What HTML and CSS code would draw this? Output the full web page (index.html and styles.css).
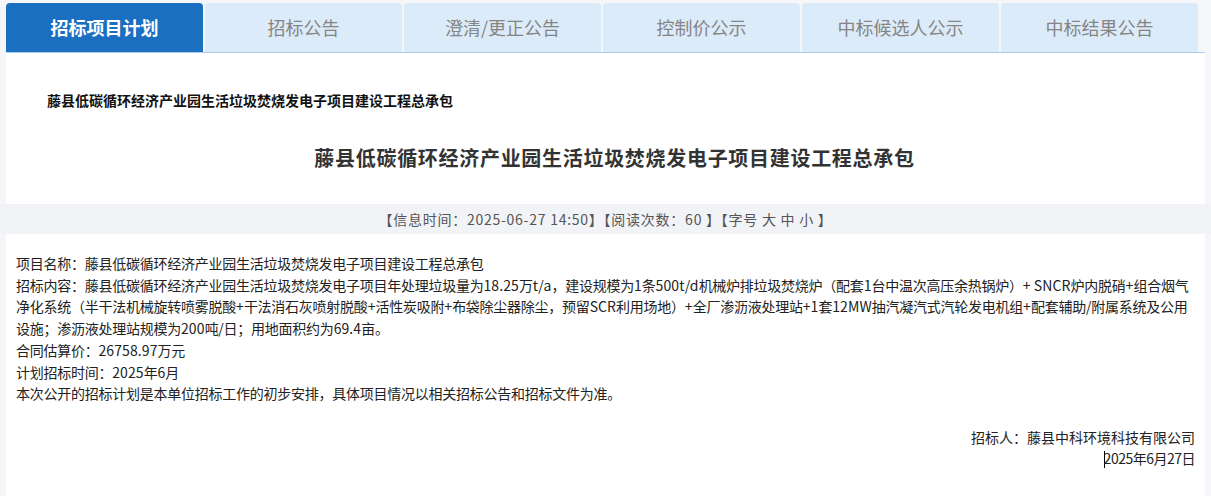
FILE: index.html
```html
<!DOCTYPE html>
<html lang="zh-CN">
<head>
    <meta charset="UTF-8">
    <meta name="viewport" content="width=device-width, initial-scale=1.0">
    <title>招标项目计划</title>
    <link rel="stylesheet" href="styles.css">
</head>
<body>
    <div class="wrap">
        <ul class="tabs">
            <li class="tab active">招标项目计划</li>
            <li class="tab">招标公告</li>
            <li class="tab">澄清/更正公告</li>
            <li class="tab">控制价公示</li>
            <li class="tab">中标候选人公示</li>
            <li class="tab">中标结果公告</li>
        </ul>

        <div class="head">
            <p class="crumb">藤县低碳循环经济产业园生活垃圾焚烧发电子项目建设工程总承包</p>
            <h1 class="title">藤县低碳循环经济产业园生活垃圾焚烧发电子项目建设工程总承包</h1>
        </div>

        <div class="meta">【信息时间：2025-06-27 14:50】【阅读次数：60 】【字号 大 中 小 】</div>

        <div class="article">
            <p>项目名称：藤县低碳循环经济产业园生活垃圾焚烧发电子项目建设工程总承包</p>
            <p>招标内容：藤县低碳循环经济产业园生活垃圾焚烧发电子项目年处理垃圾量为<span class="num">18.25</span>万<span class="num">t/a</span>，建设规模为<span class="num">1</span>条<span class="num">500t/d</span>机械炉排垃圾焚烧炉（配套<span class="num">1</span>台中温次高压余热锅炉）<span class="num">+ SNCR</span>炉内脱硝<span class="num">+</span>组合烟气净化系统（半干法机械旋转喷雾脱酸<span class="num">+</span>干法消石灰喷射脱酸<span class="num">+</span>活性炭吸附<span class="num">+</span>布袋除尘器除尘，预留<span class="num">SCR</span>利用场地）<span class="num">+</span>全厂渗沥液处理站<span class="num">+1</span>套<span class="num">12MW</span>抽汽凝汽式汽轮发电机组<span class="num">+</span>配套辅助/附属系统及公用设施；渗沥液处理站规模为<span class="num">200</span>吨/日；用地面积约为<span class="num">69.4</span>亩。</p>
            <p>合同估算价：<span class="num">26758.97</span>万元</p>
            <p>计划招标时间：<span class="num">2025</span>年<span class="num">6</span>月</p>
            <p>本次公开的招标计划是本单位招标工作的初步安排，具体项目情况以相关招标公告和招标文件为准。</p>

            <div class="sign">
                <p>招标人：藤县中科环境科技有限公司</p>
                <p class="date"><span class="caret"></span>2025年6月27日</p>
            </div>
        </div>
    </div>
</body>
</html>
```

FILE: styles.css
```css
body {
    margin: 0;
    background-color: #f4f6f9;
    font-family: "Noto Sans CJK SC", "Noto Sans", sans-serif;
    color: #333;
}

.wrap {
    margin: 0 6px;
    padding-top: 3px;
    min-height: 493px;
    background: white;
    background-clip: content-box;
}

.tabs {
    display: flex;
    gap: 2px;
    margin: 0;
    padding: 0;
    list-style: none;
    border-bottom: 1px solid #a9cdea;
    background: #f4f6f9;
}

.tab {
    width: 197px;
    height: 49px;
    line-height: 49px;
    text-align: center;
    font-size: 18px;
    color: #858585;
    background-color: #dcebf9;
    border-radius: 4px 4px 0 0;
}

.tab.active {
    background-color: #1b6fc1;
    color: white;
    font-weight: bold;
}

.head {
    background: white;
    padding: 36px 0 31px;
}

.crumb {
    margin: 0 0 32px 41px;
    font-size: 14px;
    line-height: 22px;
    font-weight: bold;
    color: #111;
}

.title {
    margin: 0;
    padding-left: 18px;
    text-align: center;
    font-size: 20px;
    letter-spacing: 0.7px;
    line-height: 30px;
    font-weight: bold;
    color: #333;
}

.meta {
    height: 30px;
    line-height: 30px;
    margin: 0 -6px;
    background-color: #f1f3f7;
    text-align: center;
    font-size: 14px;
    letter-spacing: 0.75px;
    color: #555;
}

.article {
    background: white;
    padding: 19px 10px 20px;
    font-size: 14px;
    letter-spacing: -0.25px;
    line-height: 21.7px;
    color: #222;
}

.article p {
    margin: 0;
}

.num {
    letter-spacing: 0.1px;
}

.sign {
    margin-top: 21.7px;
    text-align: right;
    letter-spacing: 0;
}

.sign .date {
    letter-spacing: -0.5px;
}

.caret {
    display: inline-block;
    width: 1px;
    height: 17px;
    margin-right: -1px;
    vertical-align: -4px;
    background: #000;
}
```
